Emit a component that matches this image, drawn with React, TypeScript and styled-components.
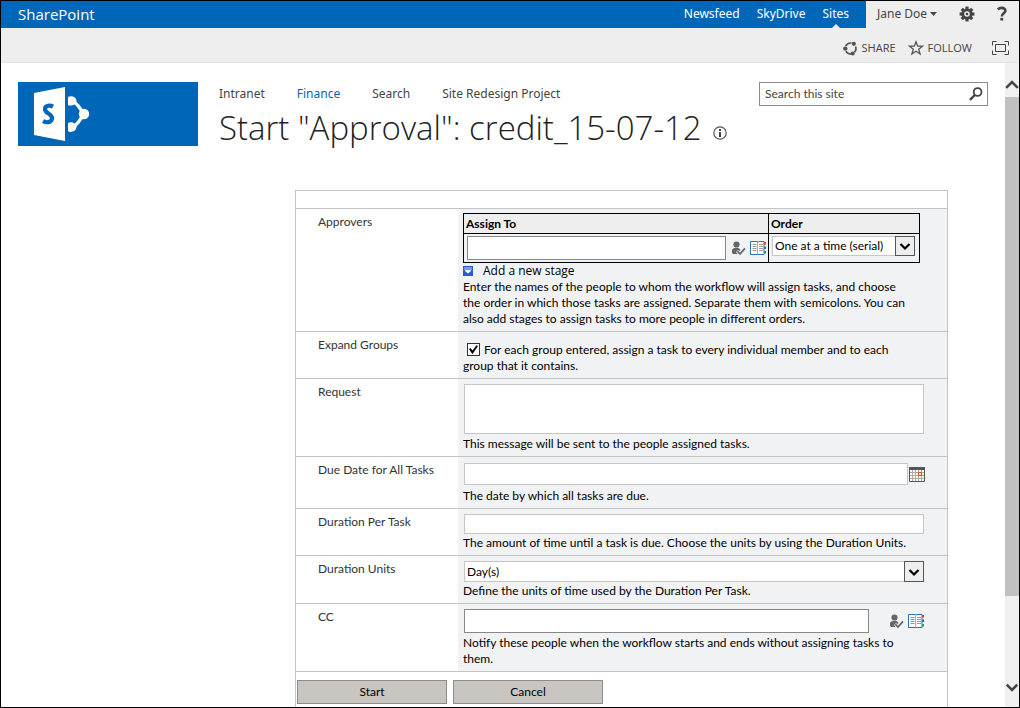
import React from 'react';
import styled, { createGlobalStyle } from 'styled-components';

const ui = '"Noto Sans", "Open Sans", sans-serif';
const light = '"Open Sans", "Noto Sans", sans-serif';
const form = 'Lato, "Open Sans", sans-serif';
const line = '#c4c4c4';

const Global = createGlobalStyle`
  * { box-sizing: border-box; }
  html, body { margin: 0; }
  body { background: #fff; color: #444; font: 12px/16px ${ui}; }
  button, input, textarea, select { font: inherit; color: inherit; margin: 0; }
`;

const Frame = styled.div`
  display: flex;
  flex-direction: column;
  height: 100vh;
  overflow: hidden;
  border: 1px solid #000;
`;

const SuiteBar = styled.header`
  display: flex;
  height: 27px;
  flex: none;
  background: #eee;
`;
const SuiteBlue = styled.div`
  display: flex;
  flex: 1;
  align-items: center;
  justify-content: space-between;
  padding: 0 17px;
  background: #0067b8;
  color: #fff;
`;
const Brand = styled.a`
  font-family: ${light};
  font-size: 15px;
  line-height: 20px;
  color: #fff;
  text-decoration: none;
  padding-bottom: 2px;
`;
const SuiteNav = styled.nav`
  display: flex;
  align-self: stretch;
  gap: 17px;
`;
const SuiteLink = styled.a<{ $active?: boolean }>`
  position: relative;
  display: flex;
  align-items: center;
  padding-bottom: 2px;
  color: #fff;
  text-decoration: none;
  ${p => p.$active && `
    &::after {
      content: '';
      position: absolute;
      left: 50%;
      bottom: 0;
      margin-left: -4px;
      border: 4px solid transparent;
      border-top: 0;
      border-bottom-color: #eee;
    }
  `}
`;
const SuiteUser = styled.div`
  display: flex;
  flex: none;
  align-items: center;
  width: 153px;
  padding: 0 11px 2px;
  justify-content: space-between;
`;
const PlainButton = styled.button`
  display: flex;
  align-items: center;
  gap: 4px;
  padding: 0;
  border: 0;
  background: none;
  white-space: nowrap;
`;
const UserButton = styled(PlainButton)`
  gap: 3px;
`;

const Ribbon = styled.div`
  display: flex;
  flex: none;
  align-items: center;
  justify-content: flex-end;
  gap: 12px;
  height: 35px;
  padding: 6px 10px 0 0;
  background: #eee;
  border-bottom: 1px solid #e1e1e1;
  font-family: ${light};
  font-size: 11px;
`;
const FocusButton = styled(PlainButton)`
  margin-left: 8px;
`;

const Body = styled.div`
  display: flex;
  flex: 1;
  min-height: 0;
`;
const Scroller = styled.div`
  flex: 1;
  min-width: 0;
  overflow-y: auto;
  scrollbar-width: none;
  padding: 19px 17px 0;
`;
const ScrollTrack = styled.div`
  display: flex;
  flex-direction: column;
  flex: none;
  align-items: center;
  width: 14px;
  padding: 15px 0 13px;
  background: #f0f0f0;
  color: #444;
`;
const ScrollThumb = styled.div`
  flex: 501;
  width: 100%;
  margin-top: 5px;
  background: #c1c1c1;
`;
const ScrollRest = styled.div`
  flex: 84;
`;

const PageHead = styled.div`
  display: flex;
  gap: 21px;
`;
const LogoTile = styled.a`
  display: block;
  flex: none;
  width: 180px;
  height: 64px;
  background: #0067b8;
`;
const HeadText = styled.div`
  flex: 1;
  min-width: 0;
`;
const TopRow = styled.div`
  display: flex;
  align-items: center;
  justify-content: space-between;
  height: 24px;
`;
const TopNav = styled.nav`
  display: flex;
  gap: 32px;
`;
const TopLink = styled.a<{ $current?: boolean }>`
  color: ${p => (p.$current ? '#0067b8' : '#444')};
  text-decoration: none;
  white-space: nowrap;
`;
const SearchBox = styled.form`
  display: flex;
  align-items: center;
  width: 229px;
  height: 24px;
  padding: 0 4px 0 5px;
  border: 1px solid #8c8c8c;
  background: #fff;
  font-family: ${form};
`;
const SearchInput = styled.input`
  flex: 1;
  min-width: 0;
  padding: 0;
  border: 0;
  outline: 0;
  background: none;
  &::placeholder { color: #444; opacity: 1; }
`;
const Title = styled.h1`
  display: flex;
  align-items: center;
  gap: 11px;
  margin: 0;
  color: #222;
  font-family: ${light};
  font-size: 33px;
  font-weight: 300;
  line-height: 44px;
  white-space: nowrap;
`;
const InfoButton = styled(PlainButton)`
  padding-top: 10px;
`;

const Form = styled.form`
  width: 653px;
  margin: 40px 0 0 277px;
  border: 1px solid ${line};
  color: #000;
  font-family: ${form};
`;
const Spacer = styled.div`
  height: 18px;
  border-bottom: 1px solid ${line};
`;
const Row = styled.div`
  display: grid;
  grid-template-columns: 162px 1fr;
  border-bottom: 1px solid ${line};
`;
const RowLabel = styled.label`
  padding: 5px 0 5px 22px;
  color: #333;
`;
const Cell = styled.div<{ $top?: number; $gap?: number }>`
  display: flex;
  flex-direction: column;
  gap: ${p => p.$gap ?? 0}px;
  padding: ${p => p.$top ?? 5}px 22px 4px 5px;
  background: #f1f2f4;
`;
const Help = styled.p`
  margin: 0;
  padding-right: 12px;
`;
const TextBox = styled.input<{ $h: number; $dark?: boolean }>`
  display: block;
  flex: 1 0 auto;
  min-width: 0;
  width: 0;
  height: ${p => p.$h}px;
  padding: 0 3px;
  border: 1px solid ${p => (p.$dark ? '#888' : '#c6c6c6')};
  background: #fff;
`;
const Message = styled.textarea`
  display: block;
  height: 50px;
  margin: 0 1px;
  resize: none;
  border: 1px solid #c6c6c6;
  background: #fff;
`;
const Line = styled.div<{ $gap?: number }>`
  display: flex;
  align-items: center;
  gap: ${p => p.$gap ?? 0}px;
`;
const FieldLine = styled(Line)`
  padding: 0 1px;
`;
const IconFieldLine = styled(Line)`
  padding-left: 1px;
`;

const Stages = styled.table`
  width: 457px;
  border-collapse: collapse;
  table-layout: fixed;
  color: #000;
  th, td { border: 1px solid #000; padding: 0; text-align: left; }
  th { height: 20px; padding-left: 2px; background: #eee; line-height: 16px; }
  td { height: 29px; }
  th:last-child { width: 151px; }
`;
const StageLine = styled(Line)`
  padding: 2px 1px 2px 3px;
`;
const OrderCell = styled.div`
  padding: 0 4px 4px 3px;
`;
const SelectWrap = styled.div<{ $h: number }>`
  position: relative;
  display: flex;
  height: ${p => p.$h}px;
`;
const FieldSelect = styled(SelectWrap)`
  margin: 0 1px;
`;
const Select = styled.select`
  flex: 1;
  min-width: 0;
  padding: 0 20px 0 2px;
  appearance: none;
  border: 1px solid #c6c6c6;
  border-radius: 0;
  background: #fff;
`;
const Drop = styled.span`
  position: absolute;
  top: 0;
  right: 0;
  bottom: 0;
  display: flex;
  align-items: center;
  justify-content: center;
  width: 20px;
  border: 1px solid #555;
  background: #eee;
  pointer-events: none;
`;
const AddStage = styled(PlainButton)`
  gap: 10px;
  height: 16px;
  font-family: ${light};
  align-self: flex-start;
`;
const CheckInput = styled.input`
  appearance: none;
  display: inline-grid;
  place-content: center;
  width: 13px;
  height: 13px;
  margin: 0 4px 0 4px;
  border: 1px solid #333;
  background: #fff;
  vertical-align: 0;
  &:checked::before {
    content: '';
    width: 9px;
    height: 9px;
    background: #000;
    clip-path: polygon(0 45%, 16% 34%, 38% 62%, 84% 4%, 100% 12%, 42% 98%, 34% 98%);
  }
`;
const Actions = styled.div`
  display: flex;
  gap: 6px;
  padding: 8px 1px 16px;
`;
const ActionButton = styled.button`
  width: 150px;
  height: 24px;
  padding: 0;
  border: 1px solid #8c8c8c;
  background: #c9c5c0;
`;

const Chevron = ({ up, size = 12 }: { up?: boolean; size?: number }) => (
  <svg width={size} height={size} viewBox="0 0 12 12" fill="none" stroke="currentColor" strokeWidth="2.2">
    <path d={up ? 'M1 8.5 6 3.5 11 8.5' : 'M1.5 4 6 8.5 10.5 4'} />
  </svg>
);
const Gear = () => (
  <svg width="16" height="16" viewBox="0 0 16 16">
    <g fill="#444">
      <circle cx="8" cy="8" r="5.6" />
      {[0, 45, 90, 135].map(a => (
        <rect key={a} x="6.4" y="0.6" width="3.2" height="14.8" transform={`rotate(${a} 8 8)`} />
      ))}
    </g>
    <circle cx="8" cy="8" r="2.8" fill="#eee" />
    <circle cx="8" cy="8" r="1.3" fill="#444" />
  </svg>
);
const HelpIcon = () => (
  <svg width="12" height="16" viewBox="0 0 12 16" fill="none" stroke="#444" strokeWidth="2.6">
    <path d="M1.800 3.400C3 2.200 4.400 1.900 5.800 1.900 8 1.900 9.400 3 9.400 4.800 9.400 7.200 5.800 7.300 5.800 10.400" />
    <path d="M4.300 13.200h2.900" />
  </svg>
);
const ShareIcon = () => (
  <svg width="15" height="15" viewBox="0 0 15 15" fill="none" stroke="#555" strokeWidth="1.6">
    <path d="M2.700 5.200A5.600 5.600 0 0 1 8.500 2M12.600 5.500A5.600 5.600 0 0 1 11.500 11.300M8 13.100A5.600 5.600 0 0 1 2.900 10.200" />
    <g fill="#555" stroke="none">
      <circle cx="10.800" cy="2.800" r="2.100" />
      <circle cx="2.300" cy="7.600" r="2.200" />
      <circle cx="9.700" cy="12.500" r="2.100" />
    </g>
  </svg>
);
const Star = () => (
  <svg width="16" height="16" viewBox="0 0 16 16" fill="none" stroke="#555" strokeWidth="1.3">
    <path d="M8 1.800 9.700 6.200h4.800l-3.800 3 1.400 4.800L8 11.200l-4.100 2.800 1.400-4.800-3.800-3h4.800z" />
  </svg>
);
const FocusIcon = () => (
  <svg width="17" height="14" viewBox="0 0 17 14" fill="none" stroke="#444">
    <path d="M4.500.5h-4v4M12.500.5h4v4M.5 9.500v4h4M16.500 9.500v4h-4" />
    <path d="M3.500 3.500h10v7h-10z" />
  </svg>
);
const SearchIcon = () => (
  <svg width="14" height="14" viewBox="0 0 14 14" fill="none" stroke="#444" strokeWidth="1.8">
    <circle cx="8.600" cy="5" r="3.900" />
    <path d="M5.800 8 1 12.800" strokeWidth="2.4" />
  </svg>
);
const InfoIcon = () => (
  <svg width="14" height="14" viewBox="0 0 14 14">
    <circle cx="7" cy="7" r="6.200" fill="none" stroke="#555" strokeWidth="1.200" />
    <path d="M6 3h2v2H6zM6 6h2v5H6z" fill="#444" />
  </svg>
);
const Logo = () => (
  <svg width="180" height="64" viewBox="0 0 180 64">
    <path d="M16 11 47 5v54l-31-6z" fill="#fff" />
    <path d="M35 24.600C32.500 23.200 26.800 22.800 27 27.300 27.200 31.500 34 31.500 34 36 34 41 28 40.800 25 39.200" fill="none" stroke="#0067b8" strokeWidth="4.200" />
    <g fill="none" stroke="#fff" strokeWidth="3.400">
      <path d="M55 19.500C59.500 21.500 62 26 65 31M65 33C62 38.500 59.500 42.500 55 45" />
    </g>
    <path d="M50 15C53 13.300 58 14.500 58.500 18.500 58.500 22.500 54 24.500 50 23.200zM50 41C53 39.200 58.500 41 58.500 45 58 49.500 53 50.800 50 49.300z" fill="#fff" />
    <circle cx="66" cy="32" r="5.200" fill="#fff" />
  </svg>
);
const CheckNames = () => (
  <svg width="15" height="15" viewBox="0 0 15 15">
    <circle cx="5.500" cy="3.500" r="3.100" fill="#666" />
    <path d="M1 12V9.500C1 7.500 3 7 5.500 7s3.500.6 4 2.200L8 10 7 9 5 11l1.500 2H2z" fill="#666" />
    <path d="M6.300 10.200 9 13 14 7.300" fill="none" stroke="#666" strokeWidth="1.800" />
  </svg>
);
const Book = () => (
  <svg width="17" height="14" viewBox="0 0 17 14" fill="none">
    <path d="M.5.5h6.500l1 .8 1-.8h5v13H.5z" fill="#fff" stroke="#2a6fb8" />
    <path d="M7.500 1.500v12" stroke="#8db3dc" />
    <path d="M2.500 3.500h4M2.500 5.500h4M2.500 7.500h4M2.500 9.500h4M9 3.500h4M9 5.500h4M9 7.500h4M9 9.500h4" stroke="#999" />
    <path d="M14 1h2v2.500h-2z" fill="#e0431f" />
    <path d="M14 5.500h2V8h-2z" fill="#2a6fb8" />
    <path d="M14 10h2v2.500h-2z" fill="#2f9a62" />
  </svg>
);
const Calendar = () => (
  <svg width="16" height="15" viewBox="0 0 16 15" fill="none">
    <path d="M.5.5h15v14H.5z" fill="#fff" stroke="#555" />
    <path d="M0 0h16v3H0z" fill="#555" />
    <path d="M3.500 3v11M6.500 3v11M9.500 3v11M12.500 3v11M1 5.500h14M1 8.500h14M1 11.500h14" stroke="#aaa" />
    <path d="M9.500 5.500h3v3h-3z" fill="#fff" stroke="#d95b00" strokeWidth="1.200" />
  </svg>
);
const StageIcon = () => (
  <svg width="10" height="10" viewBox="0 0 10 10">
    <path d="M0 0h10v10H0z" fill="#2a5bd0" />
    <path d="M1 1h8v3H1z" fill="#6f9af0" />
    <path d="M2 4h6v1L5 7.500 2 5z" fill="#fff" />
  </svg>
);

const PickerIcons = () => (
  <Line $gap={4}>
    <PlainButton type="button" aria-label="Check names"><CheckNames /></PlainButton>
    <PlainButton type="button" aria-label="Browse"><Book /></PlainButton>
  </Line>
);

const topLinks = ['Intranet', 'Finance', 'Search', 'Site Redesign Project'];

export default function App() {
  return (
    <>
      <Global />
      <Frame>
        <SuiteBar>
          <SuiteBlue>
            <Brand href="#">SharePoint</Brand>
            <SuiteNav>
              <SuiteLink href="#">Newsfeed</SuiteLink>
              <SuiteLink href="#">SkyDrive</SuiteLink>
              <SuiteLink href="#" $active>Sites</SuiteLink>
            </SuiteNav>
          </SuiteBlue>
          <SuiteUser>
            <UserButton type="button">
              Jane Doe
              <svg width="7" height="4" viewBox="0 0 7 4"><path d="M0 0h7L3.500 4z" fill="#444" /></svg>
            </UserButton>
            <PlainButton type="button" aria-label="Settings"><Gear /></PlainButton>
            <PlainButton type="button" aria-label="Help"><HelpIcon /></PlainButton>
          </SuiteUser>
        </SuiteBar>
        <Ribbon>
          <PlainButton type="button"><ShareIcon />SHARE</PlainButton>
          <PlainButton type="button"><Star />FOLLOW</PlainButton>
          <FocusButton type="button" aria-label="Focus on content"><FocusIcon /></FocusButton>
        </Ribbon>
        <Body>
          <Scroller>
            <PageHead>
              <LogoTile href="#" aria-label="Site home"><Logo /></LogoTile>
              <HeadText>
                <TopRow>
                  <TopNav>
                    {topLinks.map(t => (
                      <TopLink key={t} href="#" $current={t === 'Finance'}>{t}</TopLink>
                    ))}
                  </TopNav>
                  <SearchBox role="search">
                    <SearchInput aria-label="Search this site" placeholder="Search this site" />
                    <PlainButton type="button" aria-label="Search"><SearchIcon /></PlainButton>
                  </SearchBox>
                </TopRow>
                <Title>
                  Start "Approval": credit_15-07-12
                  <InfoButton type="button" aria-label="Information"><InfoIcon /></InfoButton>
                </Title>
              </HeadText>
            </PageHead>

            <Form>
              <Spacer />
              <Row>
                <RowLabel htmlFor="approvers">Approvers</RowLabel>
                <Cell $top={4}>
                  <Stages>
                    <thead>
                      <tr><th>Assign To</th><th>Order</th></tr>
                    </thead>
                    <tbody>
                      <tr>
                        <td>
                          <StageLine $gap={5}>
                            <TextBox id="approvers" $h={24} $dark />
                            <PickerIcons />
                          </StageLine>
                        </td>
                        <td>
                          <OrderCell>
                            <SelectWrap $h={20}>
                              <Select aria-label="Order">
                                <option>One at a time (serial)</option>
                                <option>All at once (parallel)</option>
                              </Select>
                              <Drop><Chevron /></Drop>
                            </SelectWrap>
                          </OrderCell>
                        </td>
                      </tr>
                    </tbody>
                  </Stages>
                  <AddStage type="button"><StageIcon />Add a new stage</AddStage>
                  <Help>
                    Enter the names of the people to whom the workflow will assign tasks, and choose
                    the order in which those tasks are assigned. Separate them with semicolons. You can
                    also add stages to assign tasks to more people in different orders.
                  </Help>
                </Cell>
              </Row>
              <Row>
                <RowLabel htmlFor="expand">Expand Groups</RowLabel>
                <Cell $top={10}>
                  <Help as="label">
                    <CheckInput id="expand" type="checkbox" defaultChecked />
                    For each group entered, assign a task to every individual member and to each group that it contains.
                  </Help>
                </Cell>
              </Row>
              <Row>
                <RowLabel htmlFor="request">Request</RowLabel>
                <Cell $gap={2}>
                  <Message id="request" />
                  <Help>This message will be sent to the people assigned tasks.</Help>
                </Cell>
              </Row>
              <Row>
                <RowLabel htmlFor="due">Due Date for All Tasks</RowLabel>
                <Cell $top={6} $gap={3}>
                  <IconFieldLine $gap={1}>
                    <TextBox id="due" $h={22} />
                    <PlainButton type="button" aria-label="Choose a date"><Calendar /></PlainButton>
                  </IconFieldLine>
                  <Help>The date by which all tasks are due.</Help>
                </Cell>
              </Row>
              <Row>
                <RowLabel htmlFor="duration">Duration Per Task</RowLabel>
                <Cell $gap={1}>
                  <FieldLine><TextBox id="duration" $h={20} /></FieldLine>
                  <Help>The amount of time until a task is due. Choose the units by using the Duration Units.</Help>
                </Cell>
              </Row>
              <Row>
                <RowLabel htmlFor="units">Duration Units</RowLabel>
                <Cell $gap={1}>
                  <FieldSelect $h={21}>
                    <Select id="units">
                      <option>Day(s)</option>
                      <option>Week(s)</option>
                      <option>Month(s)</option>
                    </Select>
                    <Drop><Chevron /></Drop>
                  </FieldSelect>
                  <Help>Define the units of time used by the Duration Per Task.</Help>
                </Cell>
              </Row>
              <Row>
                <RowLabel htmlFor="cc">CC</RowLabel>
                <Cell $gap={2}>
                  <IconFieldLine $gap={20}>
                    <TextBox id="cc" $h={24} $dark />
                    <PickerIcons />
                  </IconFieldLine>
                  <Help>Notify these people when the workflow starts and ends without assigning tasks to them.</Help>
                </Cell>
              </Row>
              <Actions>
                <ActionButton type="button">Start</ActionButton>
                <ActionButton type="button">Cancel</ActionButton>
              </Actions>
            </Form>
          </Scroller>
          <ScrollTrack aria-hidden="true">
            <Chevron up size={14} />
            <ScrollThumb />
            <ScrollRest />
            <Chevron size={14} />
          </ScrollTrack>
        </Body>
      </Frame>
    </>
  );
}
